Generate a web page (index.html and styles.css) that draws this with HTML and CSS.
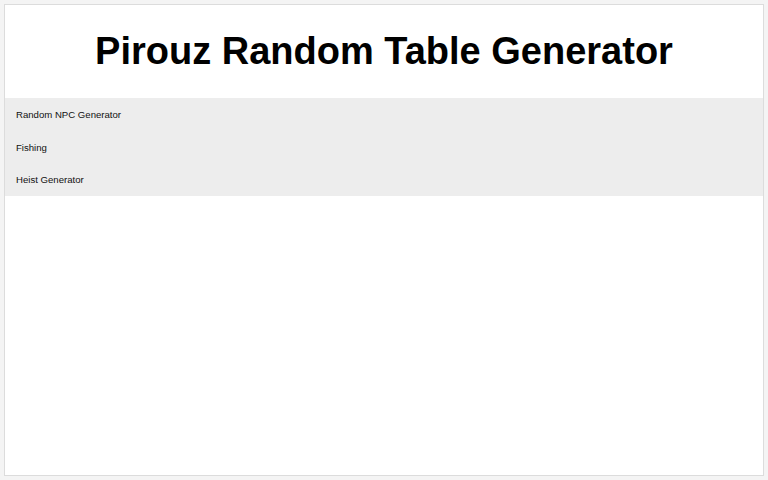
FILE: index.html
```html
<!DOCTYPE html>
<html>
<head>
<meta charset="utf-8">
<link rel="stylesheet" href="styles.css">
<title>Pirouz Random Table Generator</title>
</head>
<body>
<div class="page">
  <header class="header">
    <h1 class="title">Pirouz Random Table Generator</h1>
  </header>
  <ul class="menu">
    <li class="item">Random NPC Generator</li>
    <li class="item">Fishing</li>
    <li class="item">Heist Generator</li>
  </ul>
</div>
</body>
</html>
```
FILE: styles.css
```css
html, body {
  margin: 0;
  height: 100%;
}
body {
  background: #f4f4f4;
  padding: 4px;
  box-sizing: border-box;
  font-family: "Liberation Sans", Arial, sans-serif;
}
.page {
  background: #fff;
  border: 1px solid #dcdcdc;
  height: 100%;
  box-sizing: border-box;
  display: flex;
  flex-direction: column;
}
.header {
  height: 93px;
  display: flex;
  align-items: center;
  justify-content: center;
}
.title {
  margin: 0;
  font-size: 38px;
  font-weight: bold;
  color: #000;
}
.menu {
  list-style: none;
  margin: 0;
  padding: 0;
  background: #ededed;
}
.item {
  height: 32.5px;
  line-height: 34px;
  padding-left: 11px;
  font-size: 9.6px;
  color: #111;
}
```
